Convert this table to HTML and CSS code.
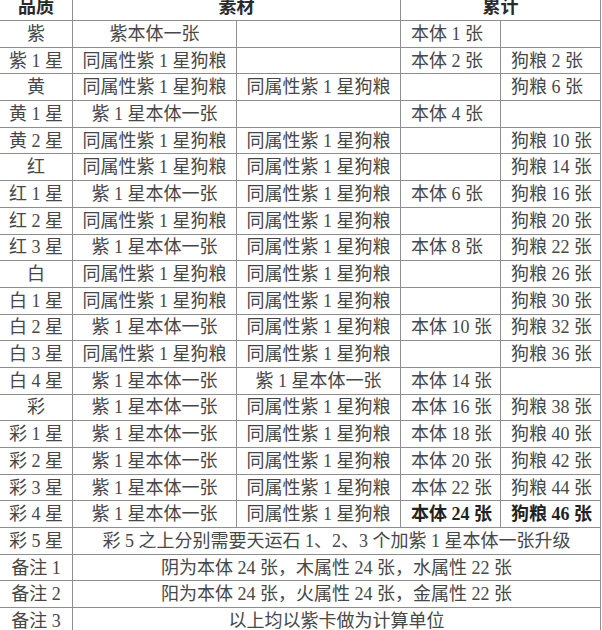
FILE: index.html
```html
<!DOCTYPE html>
<html lang="zh-CN">
<head>
<meta charset="utf-8">
<title>品质素材累计</title>
<link rel="stylesheet" href="styles.css">
</head>
<body>
<table class="sheet">
  <colgroup>
    <col class="c-q">
    <col class="c-m">
    <col class="c-m">
    <col class="c-s">
    <col class="c-s">
  </colgroup>
  <thead>
    <tr class="head">
      <th>品质</th>
      <th colspan="2">素材</th>
      <th colspan="2">累计</th>
    </tr>
  </thead>
  <tbody>
    <tr><td>紫</td><td>紫本体一张</td><td></td><td class="l">本体 1 张</td><td class="l"></td></tr>
    <tr><td>紫 1 星</td><td>同属性紫 1 星狗粮</td><td></td><td class="l">本体 2 张</td><td class="l">狗粮 2 张</td></tr>
    <tr><td>黄</td><td>同属性紫 1 星狗粮</td><td>同属性紫 1 星狗粮</td><td class="l"></td><td class="l">狗粮 6 张</td></tr>
    <tr><td>黄 1 星</td><td>紫 1 星本体一张</td><td></td><td class="l">本体 4 张</td><td class="l"></td></tr>
    <tr><td>黄 2 星</td><td>同属性紫 1 星狗粮</td><td>同属性紫 1 星狗粮</td><td class="l"></td><td class="l">狗粮 10 张</td></tr>
    <tr><td>红</td><td>同属性紫 1 星狗粮</td><td>同属性紫 1 星狗粮</td><td class="l"></td><td class="l">狗粮 14 张</td></tr>
    <tr><td>红 1 星</td><td>紫 1 星本体一张</td><td>同属性紫 1 星狗粮</td><td class="l">本体 6 张</td><td class="l">狗粮 16 张</td></tr>
    <tr><td>红 2 星</td><td>同属性紫 1 星狗粮</td><td>同属性紫 1 星狗粮</td><td class="l"></td><td class="l">狗粮 20 张</td></tr>
    <tr><td>红 3 星</td><td>紫 1 星本体一张</td><td>同属性紫 1 星狗粮</td><td class="l">本体 8 张</td><td class="l">狗粮 22 张</td></tr>
    <tr><td>白</td><td>同属性紫 1 星狗粮</td><td>同属性紫 1 星狗粮</td><td class="l"></td><td class="l">狗粮 26 张</td></tr>
    <tr><td>白 1 星</td><td>同属性紫 1 星狗粮</td><td>同属性紫 1 星狗粮</td><td class="l"></td><td class="l">狗粮 30 张</td></tr>
    <tr><td>白 2 星</td><td>紫 1 星本体一张</td><td>同属性紫 1 星狗粮</td><td class="l">本体 10 张</td><td class="l">狗粮 32 张</td></tr>
    <tr><td>白 3 星</td><td>同属性紫 1 星狗粮</td><td>同属性紫 1 星狗粮</td><td class="l"></td><td class="l">狗粮 36 张</td></tr>
    <tr><td>白 4 星</td><td>紫 1 星本体一张</td><td>紫 1 星本体一张</td><td class="l">本体 14 张</td><td class="l"></td></tr>
    <tr><td>彩</td><td>紫 1 星本体一张</td><td>同属性紫 1 星狗粮</td><td class="l">本体 16 张</td><td class="l">狗粮 38 张</td></tr>
    <tr><td>彩 1 星</td><td>紫 1 星本体一张</td><td>同属性紫 1 星狗粮</td><td class="l">本体 18 张</td><td class="l">狗粮 40 张</td></tr>
    <tr><td>彩 2 星</td><td>紫 1 星本体一张</td><td>同属性紫 1 星狗粮</td><td class="l">本体 20 张</td><td class="l">狗粮 42 张</td></tr>
    <tr><td>彩 3 星</td><td>紫 1 星本体一张</td><td>同属性紫 1 星狗粮</td><td class="l">本体 22 张</td><td class="l">狗粮 44 张</td></tr>
    <tr><td>彩 4 星</td><td>紫 1 星本体一张</td><td>同属性紫 1 星狗粮</td><td class="l strong">本体 24 张</td><td class="l strong">狗粮 46 张</td></tr>
    <tr><td>彩 5 星</td><td colspan="4">彩 5 之上分别需要天运石 1、2、3 个加紫 1 星本体一张升级</td></tr>
    <tr><td>备注 1</td><td colspan="4">阴为本体 24 张，木属性 24 张，水属性 22 张</td></tr>
    <tr><td>备注 2</td><td colspan="4">阳为本体 24 张，火属性 24 张，金属性 22 张</td></tr>
    <tr><td>备注 3</td><td colspan="4">以上均以紫卡做为计算单位</td></tr>
  </tbody>
</table>
</body>
</html>
```

FILE: styles.css
```css
html, body {
  margin: 0;
  padding: 0;
  background: #ffffff;
}

body {
  overflow: hidden;
}

.sheet {
  border-collapse: collapse;
  table-layout: fixed;
  width: 602px;
  margin: -7px 0 0 -1px;
  font-family: "Liberation Serif", "Noto Sans CJK SC", serif;
  font-size: 18px;
  color: #474747;
}

.c-q { width: 73px; }
.c-m { width: 164px; }
.c-s { width: 100px; }

.sheet th,
.sheet td {
  border: 1px solid #8e8e8e;
  padding: 0;
  text-align: center;
  vertical-align: middle;
  line-height: 20px;
  white-space: nowrap;
  overflow: hidden;
}

.sheet td.l {
  text-align: left;
  padding-left: 10px;
}

.sheet td.strong {
  font-weight: bold;
  color: #222222;
}

.head th {
  height: 26px;
  font-weight: bold;
  font-size: 18px;
  color: #2a2a2a;
}

.sheet tbody tr {
  height: 26.7px;
}
```
